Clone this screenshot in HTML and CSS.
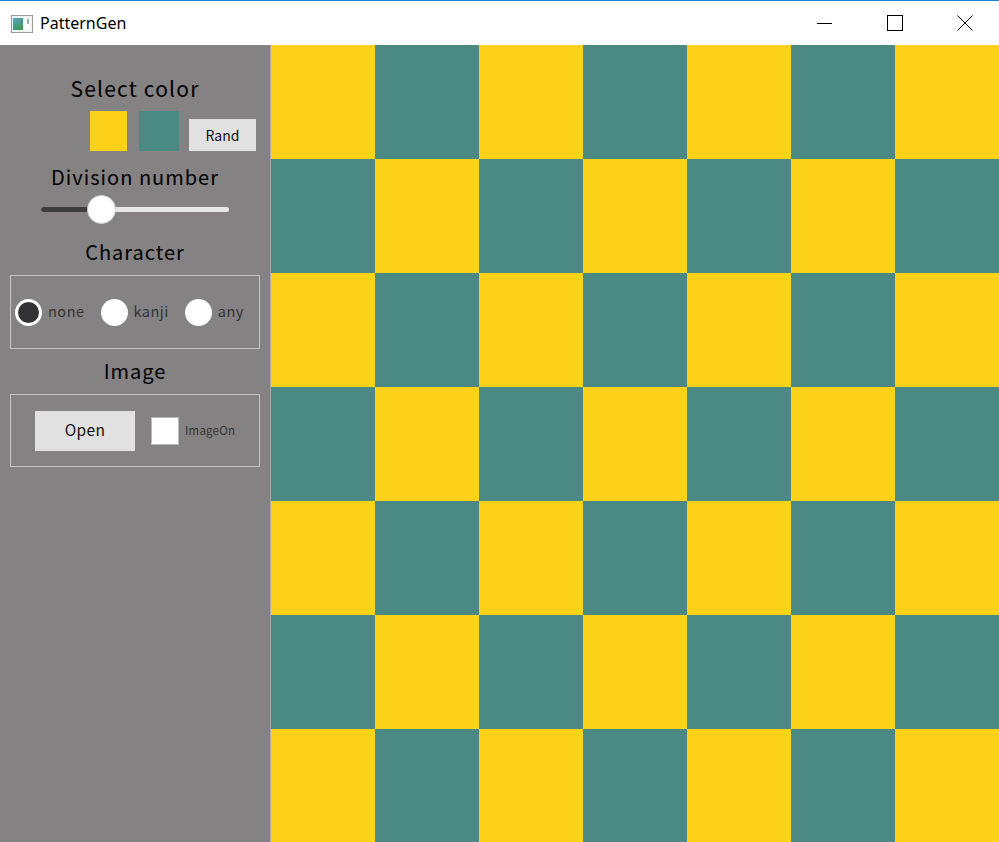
FILE: index.html
```html
<!DOCTYPE html>
<html>
<head>
<meta charset="utf-8">
<link rel="stylesheet" href="styles.css">
</head>
<body>
<div class="titlebar">
  <svg class="appicon" width="22" height="18" viewBox="0 0 22 18">
    <defs>
      <linearGradient id="g" x1="0" y1="0" x2="0.6" y2="1">
        <stop offset="0" stop-color="#5aa0c8"/>
        <stop offset="1" stop-color="#3f9a5a"/>
      </linearGradient>
    </defs>
    <rect x="0.5" y="0.5" width="21" height="17" fill="#f4f4f4" stroke="#9a9a9a"/>
    <rect x="2" y="3" width="10" height="12" fill="url(#g)"/>
    <rect x="13" y="3" width="6" height="12" fill="#ffffff"/>
    <rect x="16" y="4" width="2" height="5" fill="#8fb7a0"/>
  </svg>
  <span class="title">PatternGen</span>
  <div class="controls">
    <div class="ctl ctl-min"><svg width="16" height="16" viewBox="0 0 16 16"><path d="M1 8.5H16" stroke="#000" stroke-width="1"/></svg></div>
    <div class="ctl ctl-max"><svg width="16" height="16" viewBox="0 0 16 16"><rect x="0.5" y="0.5" width="15" height="15" fill="none" stroke="#000"/></svg></div>
    <div class="ctl ctl-close"><svg width="16" height="16" viewBox="0 0 16 16"><path d="M0.5 0.5L15.5 15.5M15.5 0.5L0.5 15.5" stroke="#000" stroke-width="1"/></svg></div>
  </div>
</div>
<div class="main">
  <aside class="sidebar">
    <div class="heading h-select">Select color</div>
    <div class="colorrow">
      <div class="swatch sw-yellow"></div>
      <div class="swatch sw-teal"></div>
      <button class="btn btn-rand">Rand</button>
    </div>
    <div class="heading h-div">Division number</div>
    <div class="slider">
      <div class="track"><div class="fill"></div></div>
      <div class="thumb"></div>
    </div>
    <div class="heading h-char">Character</div>
    <div class="group radios">
      <div class="radio"><span class="dot checked"></span><span class="rlabel">none</span></div>
      <div class="radio"><span class="dot"></span><span class="rlabel">kanji</span></div>
      <div class="radio"><span class="dot"></span><span class="rlabel">any</span></div>
    </div>
    <div class="heading h-img">Image</div>
    <div class="group imagegrp">
      <button class="btn btn-open">Open</button>
      <span class="check"></span>
      <span class="clabel">ImageOn</span>
    </div>
  </aside>
  <section class="board" id="board"></section>
</div>
<script>
  var b = document.getElementById('board');
  for (var r = 0; r < 7; r++) {
    for (var c = 0; c < 7; c++) {
      var d = document.createElement('div');
      d.className = 'cell ' + ((r + c) % 2 === 0 ? 'y' : 't');
      b.appendChild(d);
    }
  }
</script>
</body>
</html>
```
FILE: styles.css
```css
* { box-sizing: border-box; }
html, body { margin: 0; padding: 0; }
body {
  width: 999px;
  height: 842px;
  overflow: hidden;
  background: #ffffff;
  font-family: "Noto Sans CJK JP", "Noto Sans", sans-serif;
}
.titlebar {
  height: 45px;
  border-top: 1px solid #1883d7;
  display: flex;
  align-items: center;
  background: #fff;
}
.appicon { margin-left: 11px; margin-top: 1px; }
.title {
  margin-left: 7px;
  font-family: "Noto Sans", "Open Sans", sans-serif;
  font-size: 16px;
  color: #000;
}
.controls { margin-left: auto; display: flex; height: 44px; }
.ctl { height: 44px; display: flex; align-items: center; justify-content: center; }
.ctl-min { width: 70px; }
.ctl-max { width: 71px; }
.ctl-close { width: 69px; }

.main { display: flex; height: 797px; }
.sidebar {
  width: 271px;
  background: #858283;
  border-right: 1px solid #a9a7a8;
  display: flex;
  flex-direction: column;
  align-items: stretch;
  padding-top: 31px;
}
.heading {
  text-align: center;
  font-size: 20px;
  line-height: 24px;
  height: 24px;
  color: #000;
  width: 270px;
  letter-spacing: 1px;
}
.h-select { font-size: 21px; letter-spacing: 1.2px; }
.colorrow {
  display: flex;
  align-items: flex-end;
  height: 40px;
  margin-top: 11px;
  padding-left: 90px;
}
.swatch { height: 40px; }
.sw-yellow { width: 37px; background: #fdd01a; }
.sw-teal { width: 40px; background: #4b8983; margin-left: 12px; }
.btn {
  border: none;
  background: #e1e1e1;
  font-family: "Noto Sans CJK JP", "Noto Sans", sans-serif;
  color: #111;
  padding: 0;
}
.btn-rand { width: 67px; height: 32px; margin-left: 10px; font-size: 14px; padding-bottom: 1px; }
.h-div { margin-top: 14px; }
.slider {
  position: relative;
  height: 28px;
  margin-top: 6px;
}
.track {
  position: absolute;
  left: 41px;
  width: 188px;
  top: 12px;
  height: 5px;
  border-radius: 3px;
  background: #e6e6e6;
  overflow: hidden;
}
.fill { width: 60px; height: 100%; background: #3c3c3c; }
.thumb {
  position: absolute;
  left: 87px;
  top: 0;
  width: 29px;
  height: 29px;
  border-radius: 50%;
  background: #fff;
  border: 1px solid #d0d0d0;
}
.h-char { margin-top: 17px; }
.group {
  margin-left: 10px;
  width: 250px;
  border: 1px solid #c4c2c3;
  display: flex;
  align-items: center;
}
.radios { height: 74px; margin-top: 11px; padding-left: 4px; }
.radio { display: flex; align-items: center; margin-right: 16px; }
.dot {
  width: 27px; height: 27px; border-radius: 50%;
  background: #fff;
  flex: none;
}
.dot.checked { background: #333335; border: 3px solid #fff; }
.rlabel { margin-left: 6px; font-size: 14.5px; color: #333; letter-spacing: 0.5px; margin-bottom: 3px; }
.h-img { margin-top: 10px; }
.imagegrp { height: 73px; margin-top: 11px; padding-left: 24px; }
.btn-open { width: 100px; height: 40px; font-size: 15.5px; letter-spacing: 0.3px; padding-bottom: 3px; }
.check {
  width: 28px; height: 28px; background: #fff; border: 1px solid #bbb;
  margin-left: 16px;
}
.clabel { margin-left: 6px; font-size: 11.5px; color: #333; letter-spacing: 0.2px; margin-bottom: 1px; }

.board {
  display: grid;
  grid-template-columns: repeat(7, 104px);
  grid-template-rows: repeat(7, 114px);
  width: 728px;
  overflow: hidden;
}
.cell.y { background: #fdd01a; }
.cell.t { background: #4b8983; }
```
